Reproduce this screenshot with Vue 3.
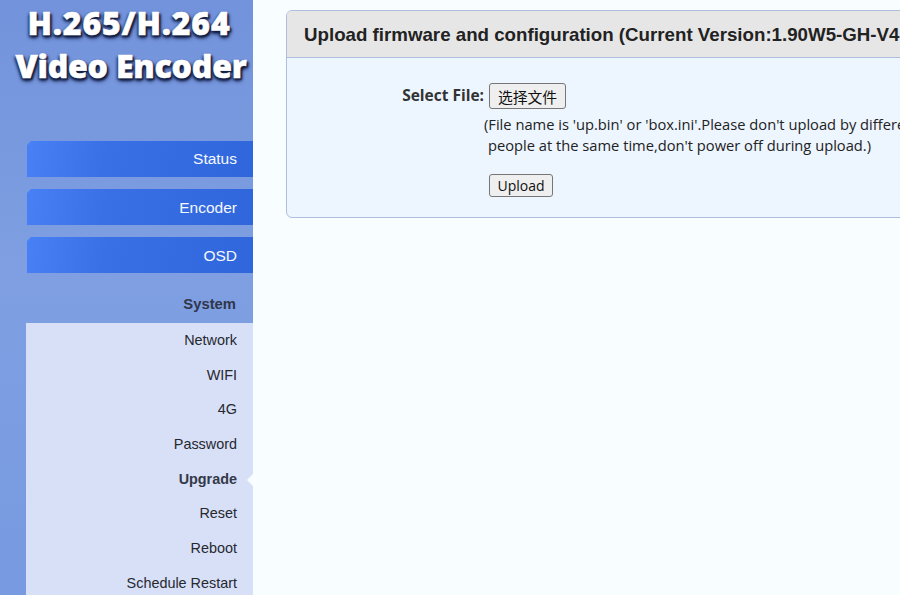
<script setup>
const mainNav = ['Status', 'Encoder', 'OSD']
const subNav = ['Network', 'WIFI', '4G', 'Password', 'Upgrade', 'Reset', 'Reboot', 'Schedule Restart']
</script>

<template>
  <div class="page">
    <aside class="sidebar">
      <div class="logo">
        <div class="logo-top">H.265/H.264</div>
        <div class="logo-bottom">Video Encoder</div>
      </div>
      <nav class="main-nav">
        <a v-for="item in mainNav" :key="item" class="main-item">{{ item }}</a>
      </nav>
      <div class="section">System</div>
      <ul class="sub-nav">
        <li v-for="item in subNav" :key="item" class="sub-item" :class="{ active: item === 'Upgrade' }">{{ item }}</li>
      </ul>
    </aside>
    <main class="content">
      <section class="panel">
        <h2 class="panel-head">Upload firmware and configuration (Current Version:1.90W5-GH-V4</h2>
        <div class="panel-body">
          <div class="field">
            <label class="label">Select File:</label>
            <button class="btn file-btn">选择文件</button>
          </div>
          <p class="note">(File name is 'up.bin' or 'box.ini'.Please don't upload by different</p>
          <p class="note second">people at the same time,don't power off during upload.)</p>
          <button class="btn upload-btn">Upload</button>
        </div>
      </section>
    </main>
  </div>
</template>

<style>
html, body { margin: 0; overflow: hidden; }
</style>

<style scoped>
.page {
  width: 900px;
  height: 595px;
  display: flex;
  overflow: hidden;
  background: #f8fdff;
  font-family: "Liberation Sans", Arial, sans-serif;
}
.sidebar {
  width: 253px;
  flex: none;
  height: 595px;
  overflow: hidden;
  background: linear-gradient(180deg, #7292db 0%, #7f9fe2 45%, #779ae0 100%);
}
.logo {
  height: 141px;
  box-sizing: border-box;
  padding: 1px 0 0 9px;
  text-align: center;
  font-family: "Open Sans", sans-serif;
  font-weight: 800;
  font-size: 32px;
  line-height: 43px;
  color: #fff;
  white-space: nowrap;
  -webkit-text-stroke: 0.5px #fff;
  text-shadow: 2px 2px 2px #141f44, -1px 2px 3px #141f44, 1px 3px 4px #1f2e5c;
}
.logo-top { letter-spacing: 0.8px; margin-left: -4px; }
.logo-bottom { letter-spacing: -0.2px; }
.main-nav {
  display: flex;
  flex-direction: column;
  gap: 12px;
  margin-left: 27px;
}
.main-item {
  height: 36px;
  line-height: 37px;
  padding-right: 16px;
  text-align: right;
  font-size: 15.5px;
  color: #f4f8ff;
  background: linear-gradient(100deg, #4880f6 0%, #3a70e6 35%, #3066dc 100%);
  clip-path: polygon(4px 0, 100% 0, 100% 100%, 0 100%, 0 4px);
}
.main-item:first-child { line-height: 36px; }
.section {
  height: 50px;
  line-height: 62px;
  padding-right: 17px;
  text-align: right;
  font-size: 14.8px;
  font-weight: 700;
  color: #30364a;
}
.sub-nav {
  list-style: none;
  margin: 0 0 0 26px;
  padding: 0;
  background: #d8e0f8;
}
.sub-item {
  position: relative;
  height: 34.7px;
  line-height: 34.3px;
  padding-right: 16px;
  text-align: right;
  font-size: 14.4px;
  color: #26282e;
}
.sub-item.active {
  font-weight: 700;
  color: #333a48;
}
.sub-item.active::after {
  content: "";
  position: absolute;
  right: 0;
  top: 12px;
  width: 0;
  height: 0;
  border: 6px solid transparent;
  border-left-width: 0;
  border-right-color: #f8fdff;
}
.content {
  flex: 1;
  min-width: 0;
  padding: 10px 0 0 33px;
}
.panel {
  width: 700px;
  height: 208px;
  box-sizing: border-box;
  border: 1px solid #b0bddc;
  border-radius: 6px;
  overflow: hidden;
  background: #edf6ff;
}
.panel-head {
  margin: 0;
  height: 47px;
  box-sizing: border-box;
  border-bottom: 1px solid #b0bddc;
  background: #e6e6e6;
  padding-left: 17px;
  font-size: 18.72px;
  font-weight: 700;
  line-height: 47px;
  color: #222;
  white-space: nowrap;
}
.panel-body {
  padding: 25px 0 0 197px;
  font-family: "Open Sans", sans-serif;
  font-size: 14.7px;
  color: #222;
  white-space: nowrap;
}
.field {
  position: relative;
  height: 26px;
  display: flex;
  align-items: center;
  padding-left: 5px;
}
.label {
  position: absolute;
  right: 100%;
  top: 2px;
  font-size: 15.5px;
  line-height: 21px;
  font-weight: 700;
  color: #333;
}
.note {
  margin: 0;
  line-height: 21px;
}
.field + .note { margin-top: 5px; }
.note.second { padding-left: 4px; }
.btn {
  box-sizing: border-box;
  border: 1px solid #767676;
  border-radius: 3px;
  background: #efefef;
  color: #111;
  padding: 0;
  cursor: pointer;
}
.file-btn {
  width: 77px;
  height: 26px;
  font-size: 14.8px;
  font-family: "Noto Sans CJK SC", sans-serif;
}
.upload-btn {
  display: block;
  margin: 18px 0 0 5px;
  width: 64px;
  height: 23px;
  font-size: 14px;
  font-family: "Open Sans", sans-serif;
}
</style>
